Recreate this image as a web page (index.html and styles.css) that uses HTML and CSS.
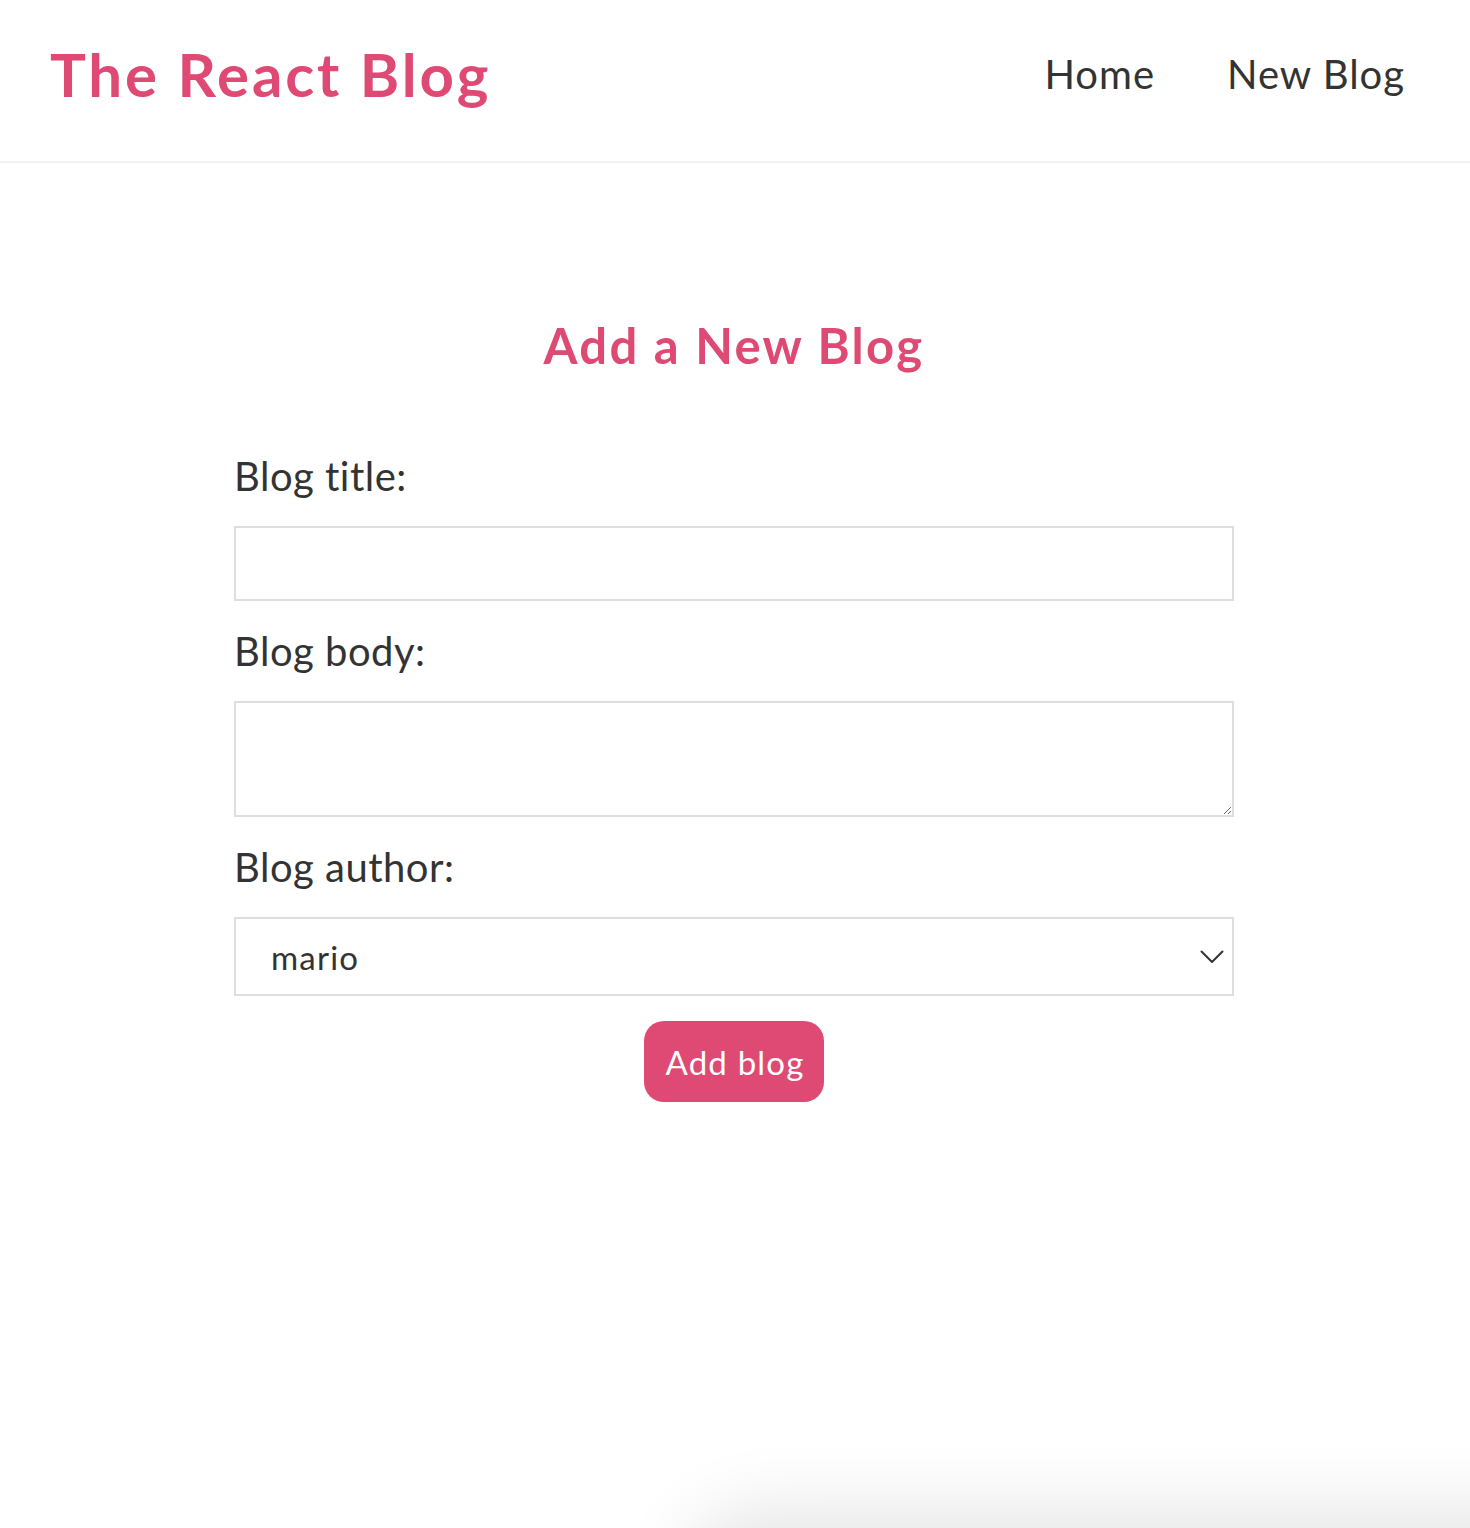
FILE: index.html
```html
<!DOCTYPE html>
<html lang="en">
<head>
<meta charset="utf-8">
<title>The React Blog</title>
<link rel="stylesheet" href="styles.css">
</head>
<body>
<header class="navbar">
  <h1 class="brand">The React Blog</h1>
  <nav class="links">
    <a href="#" class="link">Home</a>
    <a href="#" class="link">New Blog</a>
  </nav>
</header>
<main class="create">
  <h2 class="create-title">Add a New Blog</h2>
  <form class="form">
    <label class="label">Blog title:</label>
    <input class="field field-input" type="text">
    <label class="label">Blog body:</label>
    <textarea class="field field-area"></textarea>
    <label class="label">Blog author:</label>
    <div class="select-wrap">
      <select class="field field-select">
        <option>mario</option>
        <option>yoshi</option>
      </select>
      <svg class="chevron" width="24" height="14" viewBox="0 0 24 14"><path d="M1.5 1.5 L12 12 L22.5 1.5" fill="none" stroke="#333" stroke-width="2" stroke-linecap="round" stroke-linejoin="round"/></svg>
    </div>
    <button class="btn" type="button">Add blog</button>
  </form>
</main>
<div class="bottom-shade"></div>
</body>
</html>
```
FILE: styles.css
```css
* { margin: 0; box-sizing: border-box; }
html, body { height: 100%; }
body {
  font-family: "Lato", "Noto Sans", sans-serif;
  color: #333;
  background: #fff;
  overflow: hidden;
}
.navbar {
  display: flex;
  align-items: center;
  justify-content: space-between;
  height: 163px;
  padding: 0 65px 14px 50px;
  border-bottom: 2px solid #f2f2f2;
}
.brand {
  font-size: 60px;
  font-weight: 700;
  color: #de4a73;
  letter-spacing: 2.9px;
  line-height: 72px;
}
.links {
  display: flex;
  gap: 72px;
}
.link {
  font-size: 40px;
  color: #333;
  text-decoration: none;
  line-height: 50px;
  letter-spacing: 1px;
}
.page {
  padding-right: 2px;
}
.create {
  width: 1000px;
  margin: 0 auto;
  padding-top: 151px;
  text-align: center;
  transform: translateX(-1px);
}
.create-title {
  font-size: 49px;
  font-weight: 700;
  color: #de4a73;
  line-height: 62px;
  margin-bottom: 75px;
  letter-spacing: 2.3px;
}
.form { text-align: left; }
.label {
  display: block;
  font-size: 40px;
  line-height: 50px;
  height: 50px;
  letter-spacing: 0.5px;
}
.field {
  display: block;
  width: 100%;
  margin: 25px 0;
  border: 2px solid #dedede;
  border-radius: 0;
  background: #fff;
  font-family: "Lato", "Noto Sans", sans-serif;
  color: #333;
}
.field-input { height: 75px; }
.field-area { height: 116px; }
.select-wrap { position: relative; }
.field-select {
  height: 79px;
  appearance: none;
  -webkit-appearance: none;
  font-size: 33px;
  letter-spacing: 1.2px;
  padding: 0 0 0 35px;
}
.chevron {
  position: absolute;
  right: 10px;
  top: 33px;
}
.btn {
  display: block;
  margin: 0 auto;
  width: 180px;
  height: 81px;
  background: #de4a73;
  color: #fff;
  border: 0;
  border-radius: 20px;
  font-family: "Lato", "Noto Sans", sans-serif;
  font-size: 33px;
  letter-spacing: 1.2px;
  padding: 0 0 0 2px;
}
.bottom-shade {
  position: fixed;
  left: 700px;
  right: -200px;
  bottom: -120px;
  height: 120px;
  box-shadow: 0 0 70px 20px rgba(0,0,0,0.10);
  border-radius: 60px;
}
```
